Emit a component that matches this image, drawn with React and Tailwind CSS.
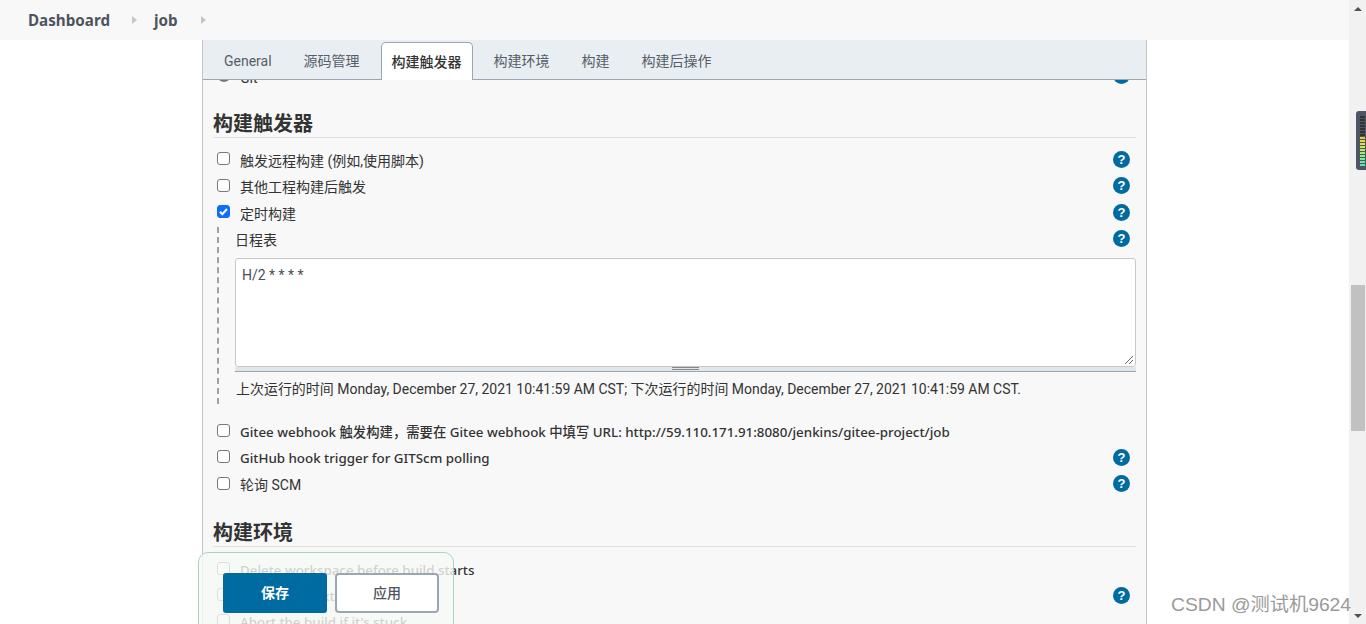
import React from 'react';

const sans = 'font-["Roboto","Noto_Sans_CJK_SC",sans-serif]';
const baseText = 'mt-[2px] text-[14px]';
const wideText = 'text-[13.35px] font-medium font-["Noto_Sans","Noto_Sans_CJK_SC",sans-serif]';

const HelpIcon = ({ className = '' }) => (
  <span className={`block w-[17px] h-[17px] shrink-0 rounded-full bg-[#006ba1] text-white text-[13px] leading-[17px] font-bold text-center font-['Liberation_Sans',sans-serif] ${className}`}>
    ?
  </span>
);

const Check = ({ checked }) => (
  <span
    className={`w-[13px] h-[13px] mb-[3px] shrink-0 rounded-[3px] border flex items-center justify-center ${
      checked ? 'bg-[#0d6efd] border-[#0d6efd]' : 'bg-white border-[#767676]'
    }`}
  >
    {checked && (
      <svg width="11" height="11" viewBox="0 0 11 11" fill="none">
        <path d="M2 5.8l2.3 2.4L9 3" stroke="#fff" strokeWidth="2" />
      </svg>
    )}
  </span>
);

const Row = ({ label, checked, help = true, className = 'h-[26.5px]', text = baseText }) => (
  <div className={`flex items-center pl-[4px] pr-[6px] ${className}`}>
    <Check checked={checked} />
    <span className={`ml-[10px] text-[#333] ${text}`}>{label}</span>
    {help && <HelpIcon className="ml-auto mb-[2px]" />}
  </div>
);

const Heading = ({ children }) => (
  <h2 className="text-[20px] leading-[26px] font-bold text-[#333] border-b border-[#e0e0e0]">
    {children}
  </h2>
);

export default function App() {
  return (
    <div className={`relative h-[624px] overflow-hidden bg-white flex ${sans}`}>
      <div className="flex-1 min-w-0 flex flex-col">
        {/* Breadcrumb */}
        <div className="h-10 shrink-0 bg-[#f8f8f8] flex items-center pl-7 text-[15.2px] font-bold text-[#4d545d] font-['Noto_Sans',sans-serif]">
          <span>Dashboard</span>
          <span className="ml-[22px] w-0 h-0 border-y-[4px] border-y-transparent border-l-[5px] border-l-[#c5c5c5]" />
          <span className="ml-[17px]">job</span>
          <span className="ml-[23px] w-0 h-0 border-y-[4px] border-y-transparent border-l-[5px] border-l-[#c5c5c5]" />
        </div>

        <div className="flex-1 min-h-0 pl-[202px] pr-[202px]">
          <div className="h-full w-[945px] border-x border-[#c4c4c4] bg-[#f8f8f8] flex flex-col overflow-hidden">
            {/* Tab bar */}
            <div className="relative z-10 h-10 shrink-0 bg-[#e9eef2] border-b border-[#9aa7b3] flex items-end pl-[5px] text-[14px] text-[#555e68]">
              <div className="h-[38px] px-[16px] pt-[2px] flex items-center">General</div>
              <div className="h-[38px] px-[16px] pt-[2px] flex items-center">源码管理</div>
              <div className="h-[38px] -mb-px ml-[5px] mr-[5px] px-[10px] pt-[2px] flex items-center bg-white border border-b-0 border-[#9aa7b3] rounded-t-[5px] font-medium text-[#333]">
                构建触发器
              </div>
              <div className="h-[38px] px-[16px] pt-[2px] flex items-center">构建环境</div>
              <div className="h-[38px] px-[16px] pt-[2px] flex items-center">构建</div>
              <div className="h-[38px] px-[16px] pt-[2px] flex items-center">构建后操作</div>
            </div>

            {/* Form */}
            <div className="px-[10px] text-[#333]">
              <div className="-mt-[13px] h-[16px] flex items-start pl-[5px] pr-[6px]">
                <span className="mt-[3px] w-[12px] h-[12px] rounded-full bg-[#777]" />
                <span className="ml-[10px] mt-[3px] text-[14px] leading-[16px]">Git</span>
                <HelpIcon className="ml-auto" />
              </div>
              <div className="mt-[28px]">
                <Heading>构建触发器</Heading>
              </div>
              <div className="mt-[9px]">
                <Row label="触发远程构建 (例如,使用脚本)" />
                <Row label="其他工程构建后触发" />
                <Row label="定时构建" checked />
              </div>
              {/* Schedule block */}
              <div className="ml-[4px] h-[177px] border-l-2 border-dashed border-[#a0a0a0] pl-[16px]">
                <div className="h-[25px] flex items-center pr-[6px] text-[14px] justify-between">
                  <span className="mt-[2px]">日程表</span>
                  <HelpIcon className="mb-[2px]" />
                </div>
                <div className="mt-[6px] h-[109px] rounded-[3px] border border-[#c8c8c8] bg-white px-[6px] pt-[7px] text-[14px] leading-[19px] text-[#495057] relative">
                  H/2 * * * *
                  <svg className="absolute right-[1px] bottom-[1px]" width="10" height="10" viewBox="0 0 10 10">
                    <path d="M9 1L1 9M9 5L5 9" stroke="#666" strokeWidth="1" />
                  </svg>
                </div>
                <div className="h-[5px] bg-[#e1e6ea] border-b border-[#9aa7b3] flex justify-center items-center">
                  <span className="w-[27px] h-[3px] border-y border-[#888]" />
                </div>
                <p className="mt-[8px] ml-[1px] text-[13.97px] leading-[18px] whitespace-nowrap">
                  上次运行的时间 Monday, December 27, 2021 10:41:59 AM CST; 下次运行的时间 Monday, December 27, 2021 10:41:59 AM CST.
                </p>
              </div>
              <div className="mt-[15px]">
                <Row label="Gitee webhook 触发构建，需要在 Gitee webhook 中填写 URL: http://59.110.171.91:8080/jenkins/gitee-project/job" help={false} text={wideText} />
                <Row label="GitHub hook trigger for GITScm polling" text={wideText} />
                <Row label="轮询 SCM" />
              </div>
              <div className="mt-[22px]">
                <Heading>构建环境</Heading>
              </div>
              <div className="mt-[10px]">
                <Row label="Delete workspace before build starts" help={false} className="h-[26px]" text={wideText} />
                <Row label="Use secret text(s) or file(s)" className="h-[26px]" text={wideText} />
                <Row label="Abort the build if it's stuck" help={false} className="h-[26px]" text={wideText} />
              </div>
            </div>
          </div>
        </div>
      </div>

      {/* Scrollbar */}
      <div className="w-[17px] shrink-0 bg-[#f1f1f1] flex flex-col items-center">
        <span className="mt-[7px] w-0 h-0 border-x-[4px] border-x-transparent border-b-[4px] border-b-[#505050]" />
        <div className="mt-[274px] w-[14px] h-[146px] bg-[#c1c1c1]" />
        <span className="mt-auto mb-[6px] w-0 h-0 border-x-[4px] border-x-transparent border-t-[4px] border-t-[#505050]" />
      </div>

      {/* Floating meter widget */}
      <div className="absolute right-0 top-[111px] w-[10px] h-[59px] rounded-l-[3px] bg-[#4f5564] flex flex-col justify-center gap-[1px] pl-[4px]">
        {['#333','#333','#333','#333','#333','#333','#333','#f0c830','#e8d838','#e0e040','#d0e850','#b8ec60','#a0ee70','#88f080','#70f090','#60f0a0','#58e8b0'].map((c, i) => (
          <span key={i} className="block w-[5px] h-[2px]" style={{ backgroundColor: c }} />
        ))}
      </div>

      {/* Sticky save bar */}
      <div className="absolute left-[198px] top-[552px] w-[256px] h-[90px] rounded-t-[10px] border border-[#a9d5c0] bg-[#f6f9f5]/80 flex items-start gap-[8px] pl-[24px] pt-[20px]">
        <button className="w-[104px] h-[40px] rounded-[3px] bg-[#006ba1] text-white text-[14px] font-bold">保存</button>
        <button className="w-[104px] h-[40px] rounded-[4px] bg-white border-2 border-[#9aa7b3] text-[#4d545d] text-[14px] font-medium">应用</button>
      </div>

      {/* Watermark */}
      <span className="absolute left-[1171px] top-[592px] text-[19.25px] leading-[26px] text-[#9a9a9a] whitespace-nowrap font-['Liberation_Sans','Noto_Sans_CJK_SC',sans-serif]">
        CSDN @测试机9624
      </span>
    </div>
  );
}
